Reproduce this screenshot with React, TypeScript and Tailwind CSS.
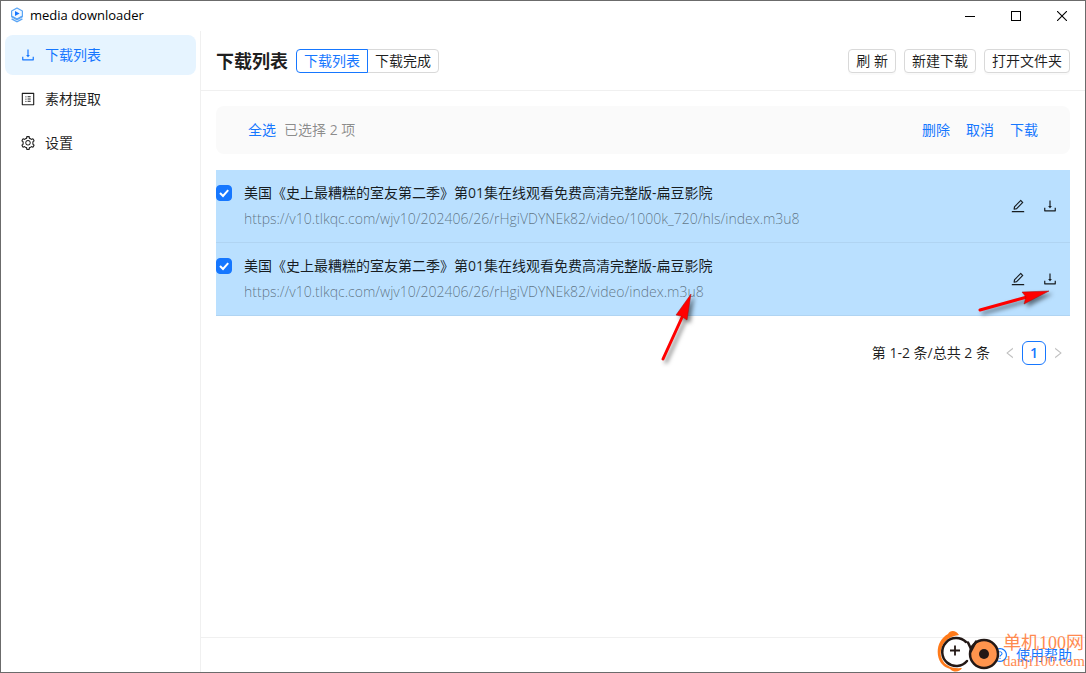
import { useState } from 'react';
import {
  AiOutlineDownload,
  AiOutlineEdit,
  AiOutlineLeft,
  AiOutlineProfile,
  AiOutlineQuestionCircle,
  AiOutlineRight,
  AiOutlineSetting,
} from 'react-icons/ai';

const MENU = [
  { label: '下载列表', icon: AiOutlineDownload },
  { label: '素材提取', icon: AiOutlineProfile },
  { label: '设置', icon: AiOutlineSetting },
];

const VIDEOS = [
  {
    id: 1,
    name: '美国《史上最糟糕的室友第二季》第01集在线观看免费高清完整版-扁豆影院',
    url: 'https://v10.tlkqc.com/wjv10/202406/26/rHgiVDYNEk82/video/1000k_720/hls/index.m3u8',
  },
  {
    id: 2,
    name: '美国《史上最糟糕的室友第二季》第01集在线观看免费高清完整版-扁豆影院',
    url: 'https://v10.tlkqc.com/wjv10/202406/26/rHgiVDYNEk82/video/index.m3u8',
  },
];

const smallButton =
  'h-6 rounded border border-[#d9d9d9] bg-white px-[7px] whitespace-nowrap shadow-[0_2px_0_rgba(0,0,0,0.02)]';

function AppLogo() {
  return (
    <svg width="14" height="16" viewBox="0 0 14 16" aria-hidden="true">
      <path
        d="M7 1 12.4 4v5L7 12 1.6 9V4z"
        fill="#f2f8ff"
        stroke="#5aa5f5"
        strokeWidth="1.2"
        strokeLinejoin="round"
      />
      <path d="M5 4v5L9.6 6.5z" fill="#1677ff" />
      <path
        d="M1.2 9.4 7 12.6l5.8-3.2M1.6 11.8 7 14.8l5.4-3"
        fill="none"
        stroke="#5aa5f5"
        strokeWidth="1.4"
      />
    </svg>
  );
}

function TitleBar() {
  return (
    <header className="flex h-[30px] shrink-0 items-center justify-between pl-[9px] text-black">
      <div className="flex h-7 items-center gap-[6px] self-start">
        <AppLogo />
        <span className="text-[13px] leading-[20px]">media downloader</span>
      </div>
      <div className="flex">
        <button aria-label="Minimize" className="flex h-7 w-[46px] items-center justify-center">
          <svg width="10" height="10" viewBox="0 0 10 10" shapeRendering="crispEdges">
            <path d="M0 5.5h10" stroke="#000" />
          </svg>
        </button>
        <button aria-label="Maximize" className="flex h-7 w-[46px] items-center justify-center">
          <svg width="10" height="10" viewBox="0 0 10 10" shapeRendering="crispEdges">
            <rect x=".5" y=".5" width="9" height="9" fill="none" stroke="#000" />
          </svg>
        </button>
        <button aria-label="Close" className="flex h-7 w-[46px] items-center justify-center">
          <svg width="10" height="10" viewBox="0 0 10 10">
            <path d="m0 0 10 10M10 0 0 10" stroke="#000" strokeWidth="1.1" />
          </svg>
        </button>
      </div>
    </header>
  );
}

function Sidebar() {
  return (
    <nav className="flex w-[200px] shrink-0 flex-col gap-1 border-r border-[#f0f0f0] px-1 pt-1">
      {MENU.map(({ label, icon: Icon }, i) => (
        <button
          key={label}
          className={`flex h-10 items-center gap-[9px] rounded-lg px-[15px] ${
            i === 0 ? 'bg-[#e6f4ff] text-[#1677ff]' : ''
          }`}
        >
          <Icon size={16} />
          {label}
        </button>
      ))}
    </nav>
  );
}

type RowProps = {
  video: (typeof VIDEOS)[number];
  checked: boolean;
  onToggle: () => void;
};

function VideoRow({ video, checked, onToggle }: RowProps) {
  const inputId = `video-${video.id}`;

  return (
    <li
      className={`flex items-center border-b border-black/5 py-3 pr-1 ${
        checked ? 'bg-[#bae0ff]' : ''
      }`}
    >
      <span className="relative mt-[3px] size-4 shrink-0 self-start">
        <input
          id={inputId}
          type="checkbox"
          checked={checked}
          onChange={onToggle}
          className="block size-4 appearance-none rounded border border-[#d9d9d9] bg-white checked:border-[#1677ff] checked:bg-[#1677ff]"
        />
        {checked && (
          <svg
            className="pointer-events-none absolute inset-0"
            width="16"
            height="16"
            viewBox="0 0 16 16"
          >
            <path d="m4 8 3 3 5.2-5.8" fill="none" stroke="#fff" strokeWidth="2" />
          </svg>
        )}
      </span>
      <div className="ml-3 flex min-w-0 flex-1 flex-col gap-1">
        <label htmlFor={inputId}>{video.name}</label>
        <p className="font-light text-black/50">{video.url}</p>
      </div>
      <button aria-label="编辑" className="flex size-8 items-center justify-center">
        <AiOutlineEdit size={16} />
      </button>
      <button aria-label="下载" className="flex size-8 items-center justify-center">
        <AiOutlineDownload size={16} />
      </button>
    </li>
  );
}

function Arrow({ className, d, head }: { className: string; d: string; head: string }) {
  return (
    <svg
      className={`pointer-events-none absolute drop-shadow-[3px_3px_2px_rgba(0,0,0,0.5)] ${className}`}
      aria-hidden="true"
    >
      <path d={d} stroke="#f00" strokeWidth="3" strokeLinecap="round" />
      <path d={head} fill="#f00" stroke="#a01010" strokeWidth=".5" />
    </svg>
  );
}

function Watermark() {
  return (
    <div className="pointer-events-none absolute right-0 bottom-0 flex h-[42px] items-center">
      <svg width="66" height="42" viewBox="0 0 66 42" aria-hidden="true">
        <path
          d="M22 5C19 0 13 0 11 4 0 10-2 24 4 33c3 4 7 5 9 6 4 4 10 3 12-1C14 39 6 35 4 26 2 16 10 6 22 5z"
          fill="#ff7a1a"
        />
        <path
          d="M29 12A14 14 0 1 0 30 31"
          fill="none"
          stroke="#231815"
          strokeWidth="2.5"
          strokeLinecap="round"
        />
        <path d="M13 20.5h10M18 15.5v10" stroke="#231815" strokeWidth="1.8" />
        <circle cx="47" cy="24" r="14" fill="#ff944d" stroke="#231815" strokeWidth="2.5" />
        <path
          d="M31 12.5 34.5 20 39 11.500"
          stroke="#231815"
          strokeWidth="2.5"
          strokeLinecap="round"
          fill="none"
        />
        <circle cx="47" cy="24" r="5" fill="#231815" />
      </svg>
      <div className="flex flex-col text-[#ff8a50]">
        <span className="text-[18px] leading-[20px] font-[Liberation_Serif,Noto_Sans_CJK_SC,serif]">
          单机100网
        </span>
        <span className="text-[15px] leading-[16px] font-[Liberation_Serif,serif]">
          danji100.com
        </span>
      </div>
    </div>
  );
}

export default function App() {
  const [selected, setSelected] = useState<number[]>([1, 2]);
  const [tab, setTab] = useState('下载列表');

  const toggle = (id: number) => {
    setSelected((prev) =>
      prev.includes(id) ? prev.filter((item) => item !== id) : [...prev, id]
    );
  };

  return (
    <div className="relative flex min-h-screen flex-col border border-[#6b6b6b] bg-white font-[Open_Sans,Noto_Sans_CJK_SC,sans-serif] text-[14px] leading-[22px] text-black/88">
      <TitleBar />

      <div className="flex flex-1">
        <Sidebar />

        <main className="flex min-w-0 flex-1 flex-col">
          {/* Page header */}
          <div className="flex h-[60px] items-center justify-between border-b border-[#f0f0f0] px-[15px]">
            <div className="flex items-center gap-2">
              <h1 className="text-[18px] font-bold">下载列表</h1>
              <div className="flex">
                {['下载列表', '下载完成'].map((name) => (
                  <button
                    key={name}
                    onClick={() => setTab(name)}
                    className={`-mr-px h-6 border px-[7px] first:rounded-l last:rounded-r ${
                      tab === name
                        ? 'z-10 border-[#1677ff] text-[#1677ff]'
                        : 'border-[#d9d9d9]'
                    }`}
                  >
                    {name}
                  </button>
                ))}
              </div>
            </div>
            <div className="flex gap-2">
              <button className={smallButton}>刷 新</button>
              <button className={smallButton}>新建下载</button>
              <button className={smallButton}>打开文件夹</button>
            </div>
          </div>

          <div className="flex-1 px-[15px] pt-[15px]">
            {/* Selection bar */}
            <div className="mb-4 flex h-12 items-center justify-between rounded-lg bg-[#fafafa] px-8">
              <div className="flex gap-2 text-black/45">
                <button
                  className="text-[#1677ff]"
                  onClick={() => setSelected(VIDEOS.map((v) => v.id))}
                >
                  全选
                </button>
                <span>已选择 {selected.length} 项</span>
              </div>
              <div className="flex gap-4 text-[#1677ff]">
                <button>删除</button>
                <button onClick={() => setSelected([])}>取消</button>
                <button>下载</button>
              </div>
            </div>

            <ul>
              {VIDEOS.map((video) => (
                <VideoRow
                  key={video.id}
                  video={video}
                  checked={selected.includes(video.id)}
                  onToggle={() => toggle(video.id)}
                />
              ))}
            </ul>

            {/* Pagination */}
            <div className="mt-[25px] flex h-6 items-center justify-end">
              <span className="mr-2">第 1-2 条/总共 2 条</span>
              <button aria-label="上一页" disabled className="flex size-6 items-center justify-center text-black/25">
                <AiOutlineLeft size={14} />
              </button>
              <button className="size-6 rounded-md border border-[#1677ff] leading-[20px] font-semibold text-[#1677ff]">
                1
              </button>
              <button aria-label="下一页" disabled className="flex size-6 items-center justify-center text-black/25">
                <AiOutlineRight size={14} />
              </button>
            </div>
          </div>

          <footer className="flex h-[35px] items-center justify-end border-t border-[#f0f0f0] px-[13px]">
            <a href="#help" className="flex items-center gap-2 text-[#1677ff]">
              <AiOutlineQuestionCircle size={16} />
              使用帮助
            </a>
          </footer>
        </main>
      </div>

      <Arrow
        className="top-[292px] left-[656px] h-[72px] w-[40px]"
        d="M6 66 27 20"
        head="M34 1 19 22l5 1 6 4z"
      />
      <Arrow
        className="top-[283px] right-[28px] h-[32px] w-[80px]"
        d="M3 26 50 13"
        head="M72 7 45 8l4 5-2 7z"
      />
      <Watermark />
    </div>
  );
}
